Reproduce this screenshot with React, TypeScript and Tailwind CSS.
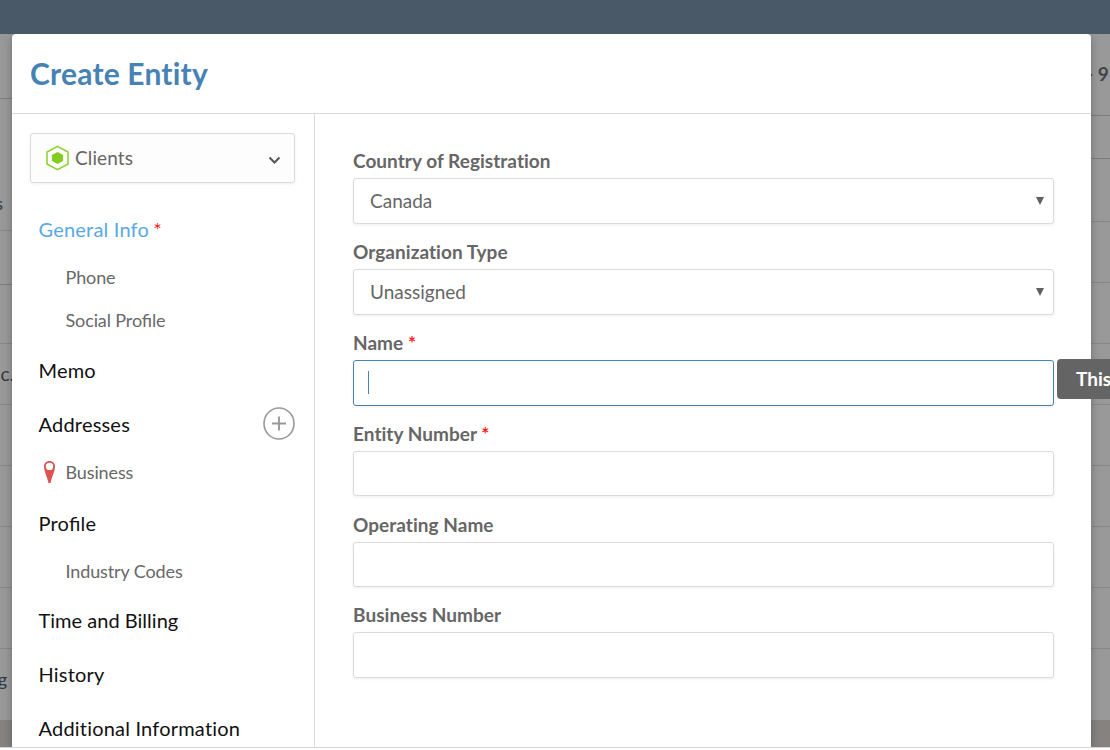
import type { ReactNode } from "react";

const leftRows = ["h-[65px]", "h-[132px]", "h-[54px]", "h-[59px]", "h-[61px]", "h-[61px]", "h-[61px]", "h-[61px]", "h-[61px]"];
const rightRows = ["h-[82px]", "h-[43px]", "h-[63px]", "h-[61px]", "h-[61px]", "h-[61px]", "h-[61px]", "h-[61px]", "h-[61px]", "h-[61px]"];
const leftText: Record<number, ReactNode> = {
  1: <span className="absolute right-[9px] top-[92px]">s</span>,
  4: <span className="absolute right-[-2px] top-[18px] text-[19px]"><span className="text-[#2b5274]">n</span>c.</span>,
};

function Divider({ dark }: { dark?: boolean }) {
  return <div className={dark ? "h-px shrink-0 bg-[#7d7d7d]" : "h-px shrink-0 bg-[#888888]"} />;
}

function LeftStrip() {
  return (
    <div className="flex w-3 shrink-0 flex-col overflow-hidden bg-[#85827f] text-[18px] leading-6 text-[#333a42]">
      <div className="flex h-[686px] shrink-0 flex-col bg-[#999999]">
        {leftRows.map((h, i) => (
          <div key={i} className={`${h} relative flex shrink-0 flex-col justify-end`}>
            {leftText[i]}
            <Divider dark={i === 0 || i === 2} />
          </div>
        ))}
        <div className="relative grow">
          <span className="absolute right-[5px] top-[18px]">g</span>
        </div>
      </div>
    </div>
  );
}

function RightStrip() {
  return (
    <div className="flex w-[19px] shrink-0 flex-col overflow-hidden bg-[#85827f]">
      <div className="flex h-[686px] shrink-0 flex-col bg-[#999999]">
        {rightRows.map((h, i) => (
          <div key={i} className={`${h} relative flex shrink-0 flex-col justify-end`}>
            {i === 0 && (
              <span className="absolute left-[-5px] top-[28px] whitespace-nowrap text-[19px] font-bold leading-6 text-[#41464b]">- 9</span>
            )}
            <Divider dark={i < 2} />
          </div>
        ))}
      </div>
    </div>
  );
}

function Star() {
  return <span className="text-[#ff1a1a]"> *</span>;
}

function Item({ children, h, active }: { children: ReactNode; h: string; active?: boolean }) {
  return (
    <div className={`${h} flex shrink-0 items-center pl-[8.500px] text-[20px] tracking-[0.2px] [font-feature-settings:'liga'] ${active ? "text-[#5aa9e6]" : "text-[#111111]"}`}>
      {children}
    </div>
  );
}

function SubItem({ children, h }: { children: ReactNode; h: string }) {
  return (
    <div className={`${h} relative flex shrink-0 items-center pl-[35.500px] text-[18px] tracking-[-0.12px] text-[#686868] [font-feature-settings:'liga']`}>
      {children}
    </div>
  );
}

function Sidebar() {
  return (
    <aside className="flex w-[303px] shrink-0 flex-col overflow-hidden border-r border-[#d8dadb] pl-[18px] pr-[19px] pt-[19px]">
      <div className="flex h-[50px] shrink-0 items-center rounded-[3px] border border-[#d9dbdc] bg-[#fdfdfd] pl-[14px] pr-3 shadow-[0_1px_3px_rgba(0,0,0,0.07)]">
        <svg width="24" height="26" viewBox="0 0 24 26" fill="none">
          <path d="M12.500 1.400 23 7v12l-10.500 5.600L2 19V7Z" stroke="#8bd12c" strokeWidth="1.500" />
          <path d="M12.500 7 18.100 10v6l-5.600 3-5.600-3v-6Z" fill="#84cc22" />
        </svg>
        <span className="ml-[6px] grow text-[19px] tracking-[0.1px] text-[#666666]">Clients</span>
        <svg width="16" height="12" viewBox="0 0 16 12" className="mt-[3px]" fill="none">
          <path d="m3.500 3.500 5 5 5-5" stroke="#555555" strokeWidth="2" />
        </svg>
      </div>
      <div className="h-[19px] shrink-0" />
      <Item h="h-[54px]" active>General Info<span className="-ml-px whitespace-pre"><Star /></span></Item>
      <SubItem h="h-[43px]">Phone</SubItem>
      <SubItem h="h-[43px]">Social Profile</SubItem>
      <Item h="h-[56px]">Memo</Item>
      <Item h="h-[52px]">
        <span className="grow">Addresses</span>
        <svg width="32" height="34" viewBox="0 0 32 34" fill="none" stroke="#999999">
          <ellipse cx="16" cy="16.500" rx="15" ry="15.500" strokeWidth="1.600" />
          <path d="M16 9.500v14M9 16.500h14" strokeWidth="1.900" />
        </svg>
      </Item>
      <SubItem h="h-[44px]">
        <svg width="13" height="24" viewBox="0 0 13 24" className="absolute left-[12.500px] top-[10px]">
          <path fillRule="evenodd" fill="#e05252" d="M6.500 1C3.200 1 1 3.400 1 6.500c0 4.500 2.800 9 4.500 16.500h2C9.200 15.500 12 11 12 6.500 12 3.400 9.800 1 6.500 1Zm0 1.700a3.700 3.700 0 1 1 0 7.400 3.700 3.700 0 0 1 0-7.400Z" />
        </svg>
        Business
      </SubItem>
      <Item h="h-[58px]">Profile</Item>
      <SubItem h="h-[38px]">Industry Codes</SubItem>
      <Item h="h-[60px]"><span className="tracking-[0.02px]">Time and Billing</span></Item>
      <Item h="h-[48px]">History</Item>
      <Item h="h-[60px]"><span className="[font-feature-settings:normal]">Additional Information</span></Item>
    </aside>
  );
}

interface FieldProps {
  label: string;
  required?: boolean;
  value?: string;
  focused?: boolean;
}

function Field({ label, required, value, focused }: FieldProps) {
  return (
    <div className="flex h-[90.830px] shrink-0 flex-col">
      <div className="h-[31px] whitespace-pre text-[19px] font-bold leading-7 tracking-[0.04px] text-[#666666] [font-variant-ligatures:none]">
        {label}
        {required && <Star />}
      </div>
      <div
        className={`relative flex h-[45.700px] items-center rounded-[3px] border bg-white pl-[16px] pr-2 shadow-[0_1px_3px_rgba(0,0,0,0.07)] ${
          focused ? "border-[#4682b4]" : "border-[#d9dbdc]"
        }`}
      >
        {value && (
          <>
            <span className="grow text-[19px] text-[#666666]">{value}</span>
            <svg width="10" height="10" viewBox="0 0 10 10">
              <path d="M1 1h8L5 9Z" fill="#606060" />
            </svg>
          </>
        )}
        {focused && (
          <>
            <span className="-ml-[2px] h-[23px] w-px bg-[#4682b4]" />
            <div className="absolute left-[703px] top-[-2px] z-10 flex h-10 w-40 items-center rounded-[4px] bg-[#646464] pl-[19px] text-[19px] font-bold whitespace-nowrap text-white">
              This field
            </div>
          </>
        )}
      </div>
    </div>
  );
}

export default function App() {
  return (
    <div className="flex h-[750px] w-[1110px] flex-col overflow-hidden bg-white font-['Lato',sans-serif]">
      <header className="h-[34px] shrink-0 bg-[#495968]" />
      <div className="flex h-[713px] shrink-0 overflow-hidden bg-[#999999]">
        <LeftStrip />
        <div className="relative z-10 flex w-[1079px] shrink-0 flex-col rounded-t-[4px] bg-white shadow-[0_3px_10px_rgba(0,0,0,0.28)]">
          <div className="flex h-20 shrink-0 items-center border-b border-[#d8dadb] pl-[18px]">
            <h1 className="text-[30px] font-bold tracking-[0.2px] text-[#4682b4]">Create Entity</h1>
          </div>
          <div className="flex min-h-0 grow">
            <Sidebar />
            <main className="flex grow flex-col pl-[38px] pr-[37px] pt-[33.300px]">
              <Field label="Country of Registration" value="Canada" />
              <Field label="Organization Type" value="Unassigned" />
              <Field label="Name" required focused />
              <Field label="Entity Number" required />
              <Field label="Operating Name" />
              <Field label="Business Number" />
            </main>
          </div>
        </div>
        <RightStrip />
      </div>
      <div className="h-px shrink-0 bg-[#d5d5d5]" />
    </div>
  );
}
